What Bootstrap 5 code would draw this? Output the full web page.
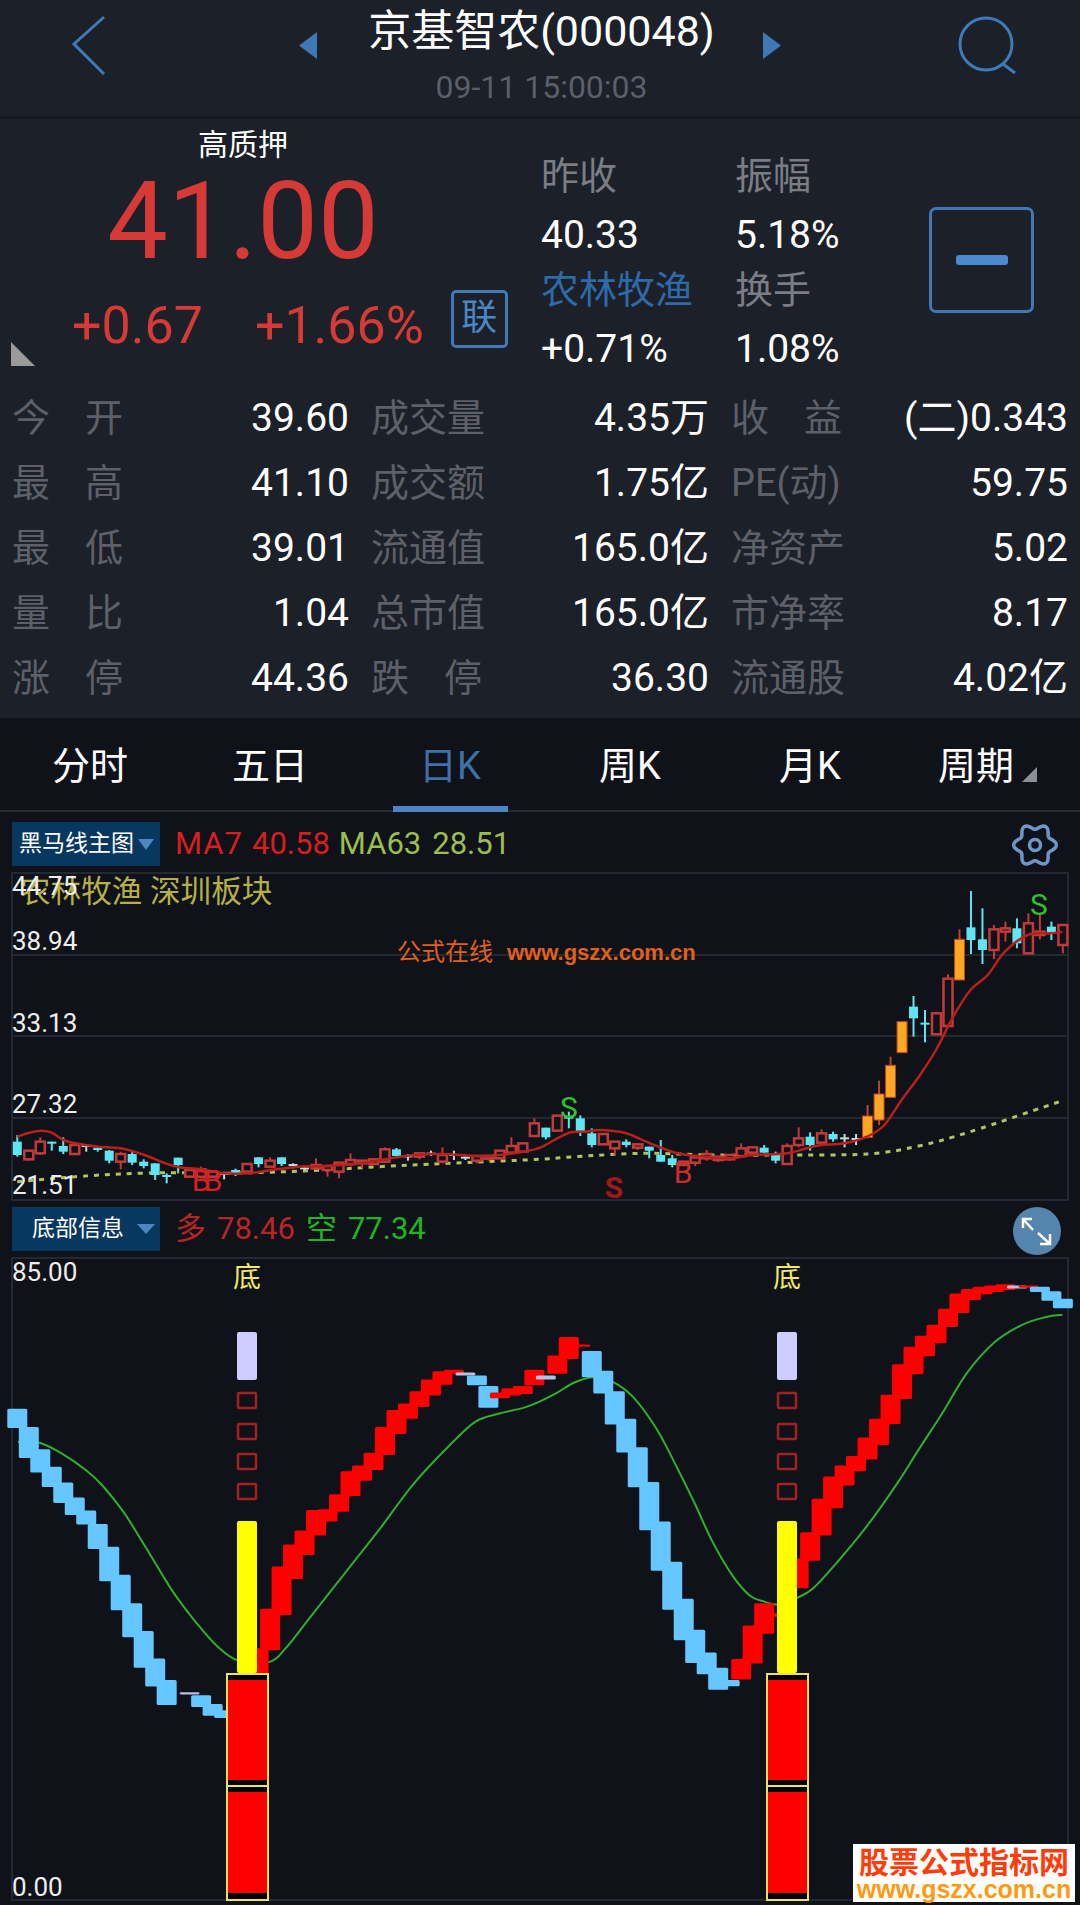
<!DOCTYPE html>
<html lang="zh">
<head>
  <meta charset="UTF-8" />
  <meta name="viewport" content="width=device-width, initial-scale=1.0" />
  <title>京基智农(000048)</title>
  <link href="https://cdn.jsdelivr.net/npm/bootstrap@5.3.3/dist/css/bootstrap.min.css" rel="stylesheet" />
  <style>
    body {
      width: 1080px;
      height: 1905px;
      overflow: hidden;
      background: #0f1218;
      color: #fff;
      font-family: Roboto, "Noto Sans CJK SC", sans-serif;
    }
    svg { display: block; overflow: visible; }
    svg text { font-family: Roboto, "Noto Sans CJK SC", sans-serif; }

    /* top bar */
    .top-bar { height: 119px; background: #1b2029; border-bottom: 3px solid #13161c; }
    .nav-slot { width: 74px; }
    .title-txt { font-size: 43px; line-height: 50px; padding-top: 6px; }
    .time-txt { font-size: 32px; line-height: 36px; color: #5a5f69; margin-top: 13px; }
    .tri-prev { margin: 32px 50px 0 0; }
    .tri-next { margin: 32px 0 0 47px; }
    .search-slot { width: 122px; padding-top: 16px; }

    /* quote */
    .quote-wrap { height: 599px; background: #1b2029; }
    .quote-top { height: 267px; }
    .price-col { width: 541px; }
    .tag-txt { font-size: 30px; line-height: 40px; padding-top: 6px; width: 486px; }
    .price-txt { font-size: 108px; line-height: 110px; padding-top: 1px; height: 112px; color: #d63a36; width: 486px; }
    .change-row { padding-left: 72px; margin-top: 19px; font-size: 52px; line-height: 60px; color: #d63a36; }
    .change-pct { margin-left: 52px; }
    .lian-box { width: 57px; height: 58px; margin-left: 27px; margin-top: -14px; border: 3px solid #3f78b5; border-radius: 5px; color: #4a86c5; font-size: 36px; line-height: 50px; }
    .corner-tri { position: absolute; left: 11px; top: 223px; width: 24px; height: 24px; background: #9a9a9a; clip-path: polygon(0 0, 100% 100%, 0 100%); }
    .mini-col { width: 194px; padding-top: 28px; }
    .mini-col div { height: 58px; line-height: 58px; font-size: 38px; white-space: nowrap; }
    .mini-col div:nth-child(2) { margin-top: 1px; font-size: 39px; }
    .mini-col div:nth-child(3) { margin-top: -3px; }
    .mini-col div:nth-child(4) { margin-top: 1px; font-size: 39px; }
    .dim-lbl { color: #7a7d84; }
    .sector-lbl { color: #2f6aa8; }
    .minus-box { width: 105px; height: 106px; margin-top: 88px; border: 3px solid #3f78b5; border-radius: 7px; }
    .minus-box i { display: block; width: 52px; height: 10px; border-radius: 3px; background: #4a8bd0; }

    .stat-grid { display: grid; grid-template-columns: 337px 338px 337px; column-gap: 22px; padding: 0 12px; }
    .stat-cell { height: 65px; font-size: 38px; line-height: 65px; white-space: nowrap; }
    .stat-cell > span:last-child { font-size: 39px; }
    .stat-lbl { color: #5d6068; }
    .stat-lbl.spread { width: 111px; }

    /* tabs */
    .tab-bar { height: 94px; border-bottom: 2px solid #262a31; }
    .tab-item { width: 180px; font-size: 38px; line-height: 96px; position: relative; }
    .tab-item.on { color: #3f70a8; }
    .tab-item.on::after { content: ""; position: absolute; left: 33px; bottom: -2px; width: 115px; height: 6px; background: #4a86c5; }
    .tab-last { padding-right: 28px; }
    .tab-tri { position: absolute; left: 122px; top: 49px; width: 15px; height: 15px; background: #8d8f94; clip-path: polygon(100% 0, 100% 100%, 0 100%); }

    /* indicator bars */
    .tool-bar { height: 60px; padding: 10px 12px 0; }
    .tool-bar.sub { height: 52px; padding-top: 4px; }
    .pick-box { width: 148px; height: 44px; background: #08385f; font-size: 23px; line-height: 44px; }
    .pick-box.sub { padding-left: 20px; }
    .pick-box.main { padding-left: 7px; }
    .pick-arrow { width: 0; height: 0; margin-left: 4px; border-left: 8px solid transparent; border-right: 8px solid transparent; border-top: 11px solid #4f86c0; }
    .pick-box.sub .pick-arrow { margin-left: 13px; border-left-width: 9px; border-right-width: 9px; border-top-width: 10px; }
    .val-row { font-size: 31px; line-height: 44px; margin-left: 15px; }
    .val-row span { margin-right: 11px; }
    .val-row .wide-lbl { letter-spacing: 1px; margin-right: 9px; }
    .val-row .tight-gap { margin-right: 9px; }
    .red-val { color: #d81e1e; }
    .green-val { color: #9bbf4f; }
    .red-sub { color: #b92525; }
    .green-sub { color: #22b522; }
    .gear-ico { margin-right: 8px; margin-top: -1px; }
    .zoom-ico { margin-right: 7px; }

    .wm-box { position: absolute; left: 853px; top: 1844px; width: 222px; height: 58px; background: #fff; text-align: center; font-weight: 700; }
    .wm-cn { color: #ff3c0a; font-size: 30px; line-height: 33px; font-family: "Noto Sans CJK SC", sans-serif; }
    .wm-en { color: #ff9a10; font-size: 25px; line-height: 24px; font-family: "Liberation Sans", sans-serif; }
  </style>
</head>
<body>

<div class="position-relative">

  <!-- top bar -->
  <div class="top-bar d-flex justify-content-between">
    <div class="nav-slot ms-5 mt-3 ps-4">
      <svg width="40" height="62" viewBox="0 0 40 62"><path d="M32 1 L2 28 L32 58" fill="none" stroke="#3e7ab8" stroke-width="3"/></svg>
    </div>
    <div class="d-flex align-items-start">
      <svg class="tri-prev" width="20" height="28" viewBox="0 0 20 28"><path d="M19 0 V27 L1 13.5 Z" fill="#3f78b5"/></svg>
      <div class="text-center">
        <div class="title-txt">京基智农(000048)</div>
        <div class="time-txt">09-11 15:00:03</div>
      </div>
      <svg class="tri-next" width="20" height="28" viewBox="0 0 20 28"><path d="M1 0 V27 L19 13.5 Z" fill="#3f78b5"/></svg>
    </div>
    <div class="search-slot">
      <svg width="62" height="60" viewBox="0 0 62 60"><circle cx="28" cy="28" r="26" fill="none" stroke="#3e7ab8" stroke-width="3"/><path d="M45 48 L57 57" stroke="#3e7ab8" stroke-width="3" fill="none"/></svg>
    </div>
  </div>

  <!-- quote -->
  <div class="quote-wrap">
    <div class="quote-top d-flex position-relative">
      <div class="price-col">
        <div class="tag-txt text-center">高质押</div>
        <div class="price-txt text-center">41.00</div>
        <div class="change-row d-flex align-items-center">
          <span>+0.67</span>
          <span class="change-pct">+1.66%</span>
          <span class="lian-box text-center">联</span>
        </div>
      </div>
      <div class="corner-tri"></div>
      <div class="mini-col">
        <div class="dim-lbl">昨收</div>
        <div>40.33</div>
        <div class="sector-lbl">农林牧渔</div>
        <div>+0.71%</div>
      </div>
      <div class="mini-col">
        <div class="dim-lbl">振幅</div>
        <div>5.18%</div>
        <div class="dim-lbl">换手</div>
        <div>1.08%</div>
      </div>
      <div class="minus-box d-flex align-items-center justify-content-center"><i></i></div>
    </div>

    <div class="stat-grid">
      <div class="stat-cell d-flex justify-content-between"><span class="stat-lbl spread d-flex justify-content-between"><span>今</span><span>开</span></span><span>39.60</span></div>
      <div class="stat-cell d-flex justify-content-between"><span class="stat-lbl">成交量</span><span>4.35万</span></div>
      <div class="stat-cell d-flex justify-content-between"><span class="stat-lbl spread d-flex justify-content-between"><span>收</span><span>益</span></span><span>(二)0.343</span></div>

      <div class="stat-cell d-flex justify-content-between"><span class="stat-lbl spread d-flex justify-content-between"><span>最</span><span>高</span></span><span>41.10</span></div>
      <div class="stat-cell d-flex justify-content-between"><span class="stat-lbl">成交额</span><span>1.75亿</span></div>
      <div class="stat-cell d-flex justify-content-between"><span class="stat-lbl">PE(动)</span><span>59.75</span></div>

      <div class="stat-cell d-flex justify-content-between"><span class="stat-lbl spread d-flex justify-content-between"><span>最</span><span>低</span></span><span>39.01</span></div>
      <div class="stat-cell d-flex justify-content-between"><span class="stat-lbl">流通值</span><span>165.0亿</span></div>
      <div class="stat-cell d-flex justify-content-between"><span class="stat-lbl">净资产</span><span>5.02</span></div>

      <div class="stat-cell d-flex justify-content-between"><span class="stat-lbl spread d-flex justify-content-between"><span>量</span><span>比</span></span><span>1.04</span></div>
      <div class="stat-cell d-flex justify-content-between"><span class="stat-lbl">总市值</span><span>165.0亿</span></div>
      <div class="stat-cell d-flex justify-content-between"><span class="stat-lbl">市净率</span><span>8.17</span></div>

      <div class="stat-cell d-flex justify-content-between"><span class="stat-lbl spread d-flex justify-content-between"><span>涨</span><span>停</span></span><span>44.36</span></div>
      <div class="stat-cell d-flex justify-content-between"><span class="stat-lbl spread d-flex justify-content-between"><span>跌</span><span>停</span></span><span>36.30</span></div>
      <div class="stat-cell d-flex justify-content-between"><span class="stat-lbl">流通股</span><span>4.02亿</span></div>
    </div>
  </div>

  <!-- period tabs -->
  <div class="tab-bar d-flex">
    <div class="tab-item text-center">分时</div>
    <div class="tab-item text-center">五日</div>
    <div class="tab-item on text-center">日K</div>
    <div class="tab-item text-center">周K</div>
    <div class="tab-item text-center">月K</div>
    <div class="tab-item tab-last text-center">周期<span class="tab-tri"></span></div>
  </div>

  <!-- main chart -->
  <div class="tool-bar d-flex align-items-start">
    <div class="pick-box main d-flex align-items-center"><span>黑马线主图</span><span class="pick-arrow"></span></div>
    <div class="val-row d-flex">
      <span class="red-val wide-lbl">MA7</span><span class="red-val tight-gap">40.58</span><span class="green-val">MA63</span><span class="green-val">28.51</span>
    </div>
    <svg class="gear-ico ms-auto" width="50" height="48" viewBox="-25 -24 50 48">
      <path id="gearPath" fill="none" stroke="#6a97c8" stroke-width="3.5" stroke-linejoin="round"/>
      <circle r="5.5" fill="none" stroke="#6a97c8" stroke-width="3.5"/>
    </svg>
  </div>
  <svg id="klineSvg" width="1080" height="331" viewBox="0 872 1080 331"></svg>

  <!-- sub chart -->
  <div class="tool-bar sub d-flex align-items-start">
    <div class="pick-box sub d-flex align-items-center"><span>底部信息</span><span class="pick-arrow"></span></div>
    <div class="val-row d-flex">
      <span class="red-sub">多</span><span class="red-sub">78.46</span><span class="green-sub">空</span><span class="green-sub">77.34</span>
    </div>
    <svg class="zoom-ico ms-auto" width="48" height="48" viewBox="-24 -24 48 48">
      <circle r="24" fill="#5584ad"/>
      <path d="M-4 -1 L-14 -12 M-14 -3 V-12 H-5 M1 2 L13 13 M13 3 V13 H3" fill="none" stroke="#fff" stroke-width="2.5"/>
    </svg>
  </div>
  <svg id="bottomSvg" width="1080" height="650" viewBox="0 1255 1080 650"></svg>

  <!-- site watermark -->
  <div class="wm-box">
    <div class="wm-cn">股票公式指标网</div>
    <div class="wm-en">www.gszx.com.cn</div>
  </div>
</div>

<script>
  var STEP = 11.49, X0 = 17.3;
  function cx(i) { return X0 + STEP * i; }

  // gear outline, wavy circle with 6 lobes
  (function () {
    var pts = [];
    for (var k = 0; k < 120; k++) {
      var a = k * Math.PI * 2 / 120;
      var r = 18.5 + 2.8 * Math.cos(6 * a);
      pts.push((Math.cos(a) * r).toFixed(2) + ' ' + (Math.sin(a) * r).toFixed(2));
    }
    document.getElementById('gearPath').setAttribute('d', 'M' + pts.join(' L') + ' Z');
  })();

  // candles, y in zoomed units (1/3 px below page y 880): [type, bodyTop, bodyBot, wickTop, wickBot]
  var candles = [
    ['c',785,825,765,830],['r',812,838,812,842],['r',785,820,772,825],['c',785,790,785,812],['c',798,815,772,822],
    ['r',795,822,795,822],['w',795,800,795,815],['c',803,810,798,815],['c',812,842,810,850],['r',822,845,815,868],
    ['c',822,848,812,855],['c',845,858,838,865],['c',850,885,850,900],['c',885,888,880,910],['c',833,855,833,880],
    ['r',870,890,870,890],['r',868,890,860,895],['r',875,890,870,892],['w',878,882,875,898],['c',870,880,866,888],
    ['r',852,875,852,878],['c',832,852,832,862],['r',842,860,832,860],['c',832,852,832,858],['w',852,858,850,865],
    ['w',862,865,858,870],['r',855,865,835,870],['r',858,870,858,890],['r',848,875,848,895],['r',840,852,820,858],
    ['r',842,850,842,865],['r',838,852,838,855],['r',808,845,802,845],['c',808,828,804,832],['w',826,830,822,842],
    ['r',820,830,820,838],['w',818,822,812,828],['r',825,845,802,850],['w',822,826,812,840],['w',830,834,825,840],
    ['r',828,842,828,850],['r',828,836,828,842],['r',812,835,812,835],['r',798,818,772,820],['r',790,815,790,815],
    ['r',730,768,715,768],['c',743,772,743,778],['r',707,752,707,752],['c',710,715,695,745],['c',715,755,706,768],
    ['c',760,795,745,802],['r',762,793,762,793],['r',785,805,785,825],['c',785,795,778,802],['r',793,803,793,810],
    ['c',800,812,800,835],['c',825,845,780,845],['c',835,855,825,862],['r',845,855,845,855],['r',832,848,832,858],
    ['r',822,835,810,842],['r',830,840,830,846],['r',825,838,825,842],['r',805,828,790,828],['r',802,818,802,826],
    ['c',803,818,795,818],['c',825,842,815,850],['r',798,852,790,852],['r',775,795,742,802],['c',770,795,757,812],
    ['r',760,788,748,788],['c',762,778,755,785],['w',772,776,762,802],['w',774,778,762,795],['o',708,772,675,775],
    ['o',642,720,602,735],['o',556,652,530,652],['o',425,518,425,518],['c',380,415,348,470],['c',428,434,390,487],
    ['r',400,463,395,463],['r',296,438,283,438],['o',178,300,148,300],['c',142,180,33,222],['c',178,210,85,252],
    ['r',148,210,135,237],['r',145,155,125,185],['c',145,190,115,205],['r',130,220,100,222],['r',155,165,100,178],
    ['c',140,158,125,180],['r',135,195,135,220]
  ];

  function ky(v) { return 880 + v / 3; }
  function z3(x) { return x / 2.904; }
  function z4(x) { return 540 + x / 2.904; }

  function mapPts(list, fx, fy) {
    return list.map(function (p) { return [fx(p[0]), fy(p[1])]; });
  }

  // catmull-rom through the points
  function smooth(p) {
    var d = 'M' + p[0][0].toFixed(1) + ' ' + p[0][1].toFixed(1);
    for (var i = 0; i < p.length - 1; i++) {
      var a = p[i - 1] || p[i], b = p[i], c = p[i + 1], e = p[i + 2] || c;
      d += ' C' + (b[0] + (c[0] - a[0]) / 6).toFixed(1) + ' ' + (b[1] + (c[1] - a[1]) / 6).toFixed(1) +
        ' ' + (c[0] - (e[0] - b[0]) / 6).toFixed(1) + ' ' + (c[1] - (e[1] - b[1]) / 6).toFixed(1) +
        ' ' + c[0].toFixed(1) + ' ' + c[1].toFixed(1);
    }
    return d;
  }

  var ma7 = mapPts([[50,770],[85,758],[120,752],[150,758],[184,780],[218,790],[285,800],[350,805],[420,825],[480,850],[520,862],[585,868],[650,880],[720,880],[790,870],[870,860],[950,858],[1050,850],[1118,838],[1200,825],[1285,822],[1385,828],[1451,825],[1520,815]], z3, ky)
    .concat(mapPts([[0,803],[50,775],[90,757],[130,755],[180,750],[250,760],[320,790],[400,820],[480,830],[550,835],[620,825],[717,820],[800,798],[883,790],[950,770],[1000,735],[1050,660],[1100,590],[1150,510],[1200,410],[1250,330],[1300,285],[1350,215],[1416,165],[1483,160],[1517,155]], z4, ky));

  var ma63 = mapPts([[50,905],[220,890],[350,882],[500,878],[650,880],[900,872],[1100,860],[1300,850]], z3, ky)
    .concat(mapPts([[0,838],[100,830],[300,820],[500,825],[700,825],[950,822],[1100,798],[1250,755],[1517,662]], z4, ky));

  var s = '';
  // grid
  [955, 1036, 1118].forEach(function (y) { s += '<line x1="12" x2="1068" y1="' + y + '" y2="' + y + '" stroke="#2c3038" stroke-width="1.5"/>'; });
  s += '<rect x="12" y="873" width="1056" height="327" fill="none" stroke="#2c3038" stroke-width="1.5"/>';

  s += '<text x="20" y="902" font-size="30.6" fill="#b5b04a" xml:space="preserve">农林牧渔 深圳板块</text>';
  s += '<text x="397" y="960" font-size="24" fill="#e0601c">公式在线</text>';
  s += '<text x="507" y="960" font-size="22" font-weight="700" fill="#e0601c" style="font-family:\'Liberation Sans\',sans-serif">www.gszx.com.cn</text>';

  s += '<path d="' + smooth(ma63) + '" fill="none" stroke="#b5c35e" stroke-width="3" stroke-dasharray="5 6"/>';

  candles.forEach(function (c, i) {
    var x = cx(i), t = c[0], top = ky(c[1]), bot = ky(c[2]), wt = ky(c[3]), wb = ky(c[4]);
    var col = t === 'c' ? '#5fe6f2' : t === 'w' ? '#c8dcdc' : t === 'o' ? '#c0432a' : '#c23a3a';
    s += '<line x1="' + x + '" x2="' + x + '" y1="' + wt + '" y2="' + wb + '" stroke="' + col + '" stroke-width="2"/>';
    if (t === 'r') {
      s += '<rect x="' + (x - 4.5) + '" y="' + top + '" width="9" height="' + Math.max(bot - top, 2) + '" fill="#0f1218" stroke="#c23a3a" stroke-width="2.5"/>';
    } else if (t === 'o') {
      s += '<rect x="' + (x - 5) + '" y="' + top + '" width="10" height="' + (bot - top) + '" fill="#fca821" stroke="#c0432a" stroke-width="1"/>';
    } else {
      s += '<rect x="' + (x - 4.5) + '" y="' + top + '" width="9" height="' + Math.max(bot - top, 2) + '" fill="' + col + '"/>';
    }
  });
  s += '<path d="' + smooth(ma7) + '" fill="none" stroke="#b8201c" stroke-width="2.5"/>';

  // signal letters
  s += '<g style="font-family:\'Liberation Sans\',sans-serif" font-size="30" text-anchor="middle">';
  s += '<text x="569" y="1118" fill="#2ec22e">S</text><text x="1039" y="915" fill="#2ec22e">S</text>';
  s += '<text x="614" y="1198" fill="#a01818" font-weight="700">S</text><text x="683" y="1183" fill="#c9302c">B</text>';
  s += '<text x="201" y="1191" fill="#d82020">B</text><text x="213" y="1191" fill="#d82020">B</text></g>';

  // price axis
  [['44.75',895],['38.94',950],['33.13',1032],['27.32',1113],['21.51',1194]].forEach(function (a) {
    s += '<text x="12" y="' + a[1] + '" font-size="26" fill="#eee">' + a[0] + '</text>';
  });
  document.getElementById('klineSvg').innerHTML = s;

  // bottom chart: [index, top, bottom, colour] y in zoomed units (1/2.289 px below page y 1220)
  var B = '#66c6ff', R = '#ff0000', G = '#b9bfe0';
  var bars = [
    [0,432,476,B],[1,474,545,B],[2,525,578,B],[3,565,611,B],[4,601,648,B],[5,635,675,B],[6,665,697,B],[7,696,753,B],
    [8,748,827,B],[9,812,893,B],[10,877,955,B],[11,941,1025,B],[12,1004,1068,B],[13,1053,1110,B],[15,1081,1086,G],
    [16,1088,1115,B],[17,1108,1135,B],[18,1122,1140,B],[21,980,1040,R],[22,890,985,R],[23,793,905,R],[24,743,822,R],
    [25,711,767,R],[26,664,722,R],[27,662,690,R],[28,628,668,R],[29,575,632,R],[30,562,597,R],[31,533,572,R],
    [32,474,538,R],[33,435,490,R],[34,420,455,R],[35,392,428,R],[36,365,402,R],[37,346,377,R],[38,343,352,R],
    [39,349,356,G],[40,356,378,B],[41,380,430,B],[42,395,408,R],[43,385,402,R],[44,380,398,R],[45,343,378,R],
    [46,356,365,G],[47,310,352,R],[48,268,318,R],[49,285,290,R],[50,300,360,B],[51,345,397,B],[52,392,468,B],
    [53,455,532,B],[54,520,612,B],[55,600,710,B],[56,690,803,B],[57,782,892,B],[58,867,962,B],[59,938,1014,B],
    [60,990,1040,B],[61,1025,1075,B],[62,1053,1067,B],[63,1005,1052,R],[64,928,1015,R],[65,877,947,R],[66,900,908,R],
    [68,775,843,R],[69,715,780,R],[70,638,722,R],[71,587,660,R],[72,562,608,R],[73,540,575,R],[74,498,548,R],
    [75,455,515,R],[76,400,467,R],[77,330,410,R],[78,290,353,R],[79,265,312,R],[80,240,282,R],[81,203,245,R],
    [82,168,213,R],[83,158,183,R],[84,153,170,R],[85,150,165,R],[86,147,160,R],[87,150,157,G],[88,150,155,R],
    [89,153,165,B],[90,163,185,B],[91,180,202,B]
  ];
  function by(v) { return 1220 + v / 2.289; }

  var g1 = mapPts([[52,508],[115,510],[180,535],[250,573],[300,610],[360,670],[420,745],[470,810],[510,860],[570,922],[630,975],[690,1008],[780,1012],[830,980],[900,910],[1000,810],[1100,710],[1200,605],[1300,520],[1380,462],[1450,443],[1520,430]], z3, by)
    .concat(mapPts([[0,415],[50,395],[100,372],[155,360],[210,370],[270,405],[340,480],[400,570],[450,650],[500,735],[560,815],[610,860],[650,873],[688,880],[746,865],[790,845],[850,795],[950,700],[1040,600],[1100,525],[1170,440],[1240,350],[1320,280],[1400,240],[1470,222],[1517,217]], z4, by));

  var h = '<rect x="12" y="1258" width="1056" height="642" fill="none" stroke="#2c3038" stroke-width="1.5"/>';
  h += '<path d="' + smooth(g1) + '" fill="none" stroke="#2fae2f" stroke-width="2"/>';
  bars.forEach(function (b) {
    h += '<rect x="' + (cx(b[0]) - 10) + '" y="' + by(b[1]) + '" width="20" height="' + (by(b[2]) - by(b[1])) + '" rx="1.5" fill="' + b[3] + '"/>';
  });

  // bottom signal columns
  [247, 787].forEach(function (x) {
    h += '<text x="' + x + '" y="1287" font-size="28" text-anchor="middle" fill="#f0e86a">底</text>';
    h += '<rect x="' + (x - 10) + '" y="1332" width="20" height="48" rx="2" fill="#ccccff"/>';
    [1393, 1424, 1454, 1484].forEach(function (y) {
      h += '<rect x="' + (x - 9) + '" y="' + y + '" width="18" height="15" rx="1" fill="none" stroke="#a52020" stroke-width="2.5"/>';
    });
    h += '<rect x="' + (x - 10) + '" y="1521" width="20" height="152" rx="2" fill="#ffff00"/>';
    h += '<rect x="' + (x - 20) + '" y="1674" width="41" height="226" fill="#000" stroke="#f0e060" stroke-width="2"/>';
    h += '<rect x="' + (x - 19) + '" y="1680" width="39" height="100" fill="#ff0000"/>';
    h += '<rect x="' + (x - 19) + '" y="1792" width="39" height="101" fill="#ff0000"/>';
    h += '<line x1="' + (x - 20) + '" x2="' + (x + 21) + '" y1="1786" y2="1786" stroke="#f0e060" stroke-width="2"/>';
  });

  [['85.00',1281],['0.00',1896]].forEach(function (a) {
    h += '<text x="12" y="' + a[1] + '" font-size="26" fill="#eee">' + a[0] + '</text>';
  });
  document.getElementById('bottomSvg').innerHTML = h;
</script>

<script src="https://cdn.jsdelivr.net/npm/bootstrap@5.3.3/dist/js/bootstrap.bundle.min.js"></script>
</body>
</html>
